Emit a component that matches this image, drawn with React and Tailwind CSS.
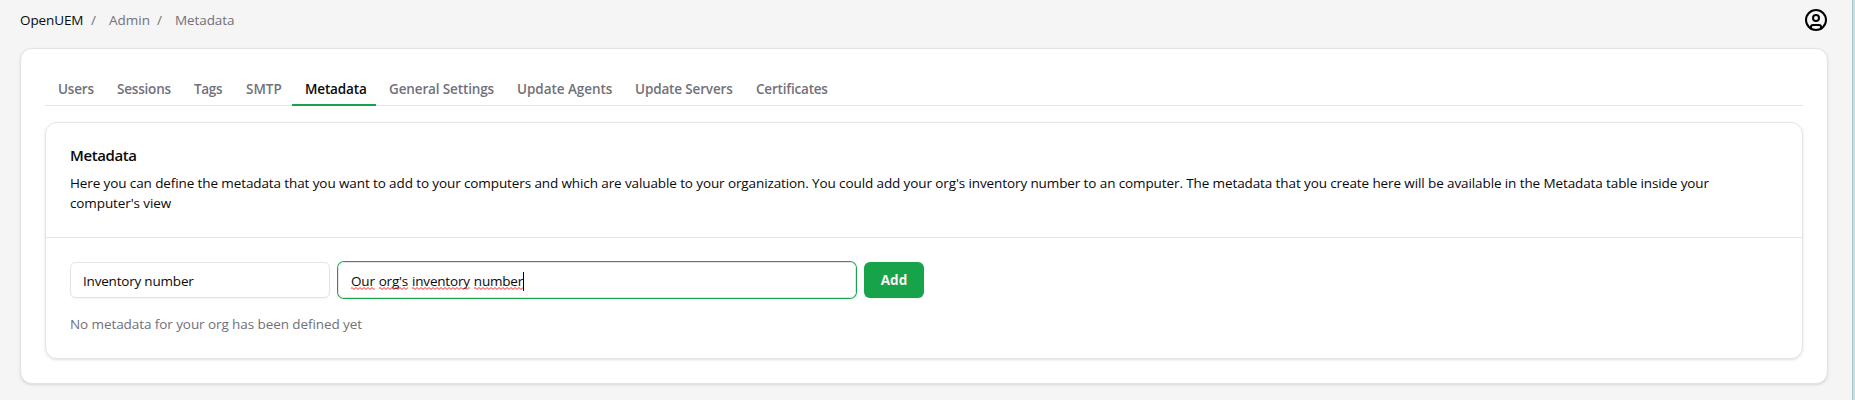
import { CircleUser } from "lucide-react";

const tabs = [
  { label: "Users", size: "w-[59px] tracking-[-0.2px]" },
  { label: "Sessions", size: "w-[77px] tracking-[-0.2px]" },
  { label: "Tags", size: "w-[52px] tracking-[-0.3px]" },
  { label: "SMTP", size: "w-[59px]" },
  { label: "Metadata", size: "w-[84px] tracking-[-0.15px]", active: true },
  { label: "General Settings", size: "w-[128px] tracking-[-0.13px]" },
  { label: "Update Agents", size: "w-[118px] tracking-[-0.05px]" },
  { label: "Update Servers", size: "w-[121px] tracking-[-0.15px]" },
  { label: "Certificates", size: "w-[98px] tracking-[-0.2px]" },
];

function Misspelled({ id, children }) {
  return (
    <span className="relative inline-block">
      {children}
      <svg className="absolute top-4 left-0 h-[3px] w-full" aria-hidden="true">
        <defs>
          <pattern id={id} width="4" height="3" patternUnits="userSpaceOnUse">
            <path d="M-1 2.5 L1 0.5 L3 2.5 L5 0.5" fill="none" stroke="#ff2020" strokeWidth="1" />
          </pattern>
        </defs>
        <rect width="100%" height="3" fill={`url(#${id})`} />
      </svg>
    </span>
  );
}

export default function App() {
  return (
    <div className="flex h-[400px] w-full bg-[#f5f5f5] font-['Open_Sans',sans-serif] text-[13.5px] leading-5 text-zinc-950">
      <div className="flex-1 pr-6 pl-5">
        <header className="flex h-12 items-start justify-between">
          <nav className="flex pt-2.5 text-zinc-500">
            <span className="w-[71px] tracking-[-0.1px] text-zinc-950">OpenUEM</span>
            <span className="w-[18px]">/</span>
            <span className="w-12">Admin</span>
            <span className="w-[18px]">/</span>
            <span className="tracking-[-0.1px]">Metadata</span>
          </nav>
          <CircleUser className="mt-2 size-6 text-black" strokeWidth={2} />
        </header>

        <main className="h-[336px] rounded-xl border border-zinc-200 bg-white px-6 pt-6 shadow-sm">
          <ul className="flex h-[33px] border-b border-zinc-200 font-semibold text-[#71717a]">
            {tabs.map((tab) => (
              <li
                key={tab.label}
                className={`${tab.size} h-[33px] shrink-0 pt-1.5 pl-[13px] whitespace-nowrap ${
                  tab.active ? "border-b-2 border-[#16a34a] text-zinc-950" : ""
                }`}
              >
                {tab.label}
              </li>
            ))}
          </ul>

          <section className="mt-4 h-[237px] rounded-xl border border-zinc-200 shadow-sm">
            <div className="h-[115px] border-b border-zinc-200 px-6 pt-[22px]">
              <h3 className="text-[15px] leading-5 font-semibold tracking-[-0.4px]">Metadata</h3>
              <p className="mt-2 tracking-[-0.107px]">
                Here you can define the metadata that you want to add to your computers and which are valuable to your
                organization. You could add your org's inventory number to an computer. The metadata that you create
                here will be available in the Metadata table inside your
                <br />
                computer's view
              </p>
            </div>
            <div className="px-6 pt-6">
              <div className="flex gap-2">
                <div className="flex h-9 w-[260px] items-center rounded-md border border-zinc-200 pt-0.5 pl-3 tracking-[-0.2px] shadow-xs">
                  Inventory number
                </div>
                <div className="flex h-9 w-[518px] items-center rounded-md border border-zinc-200 pt-0.5 pl-3 tracking-[-0.2px] shadow-xs ring-1 ring-[#16a34a]">
                  <span className="flex gap-1">
                    <Misspelled id="wave-a">Our</Misspelled>
                    <Misspelled id="wave-b">org's</Misspelled>
                    <Misspelled id="wave-c">inventory</Misspelled>
                    <Misspelled id="wave-d">number</Misspelled>
                  </span>
                  <span className="h-[19px] w-px bg-black" />
                </div>
                <button className="flex h-9 w-[60px] items-center justify-center rounded-md bg-[#16a34a] font-bold text-rose-50 shadow-xs">
                  Add
                </button>
              </div>
              <p className="mt-4 tracking-[-0.08px] text-[#71717a]">No metadata for your org has been defined yet</p>
            </div>
          </section>
        </main>
      </div>
      <div className="w-[3px] border-l border-[#a9c6c8] bg-[#c5dfe1]" />
    </div>
  );
}
